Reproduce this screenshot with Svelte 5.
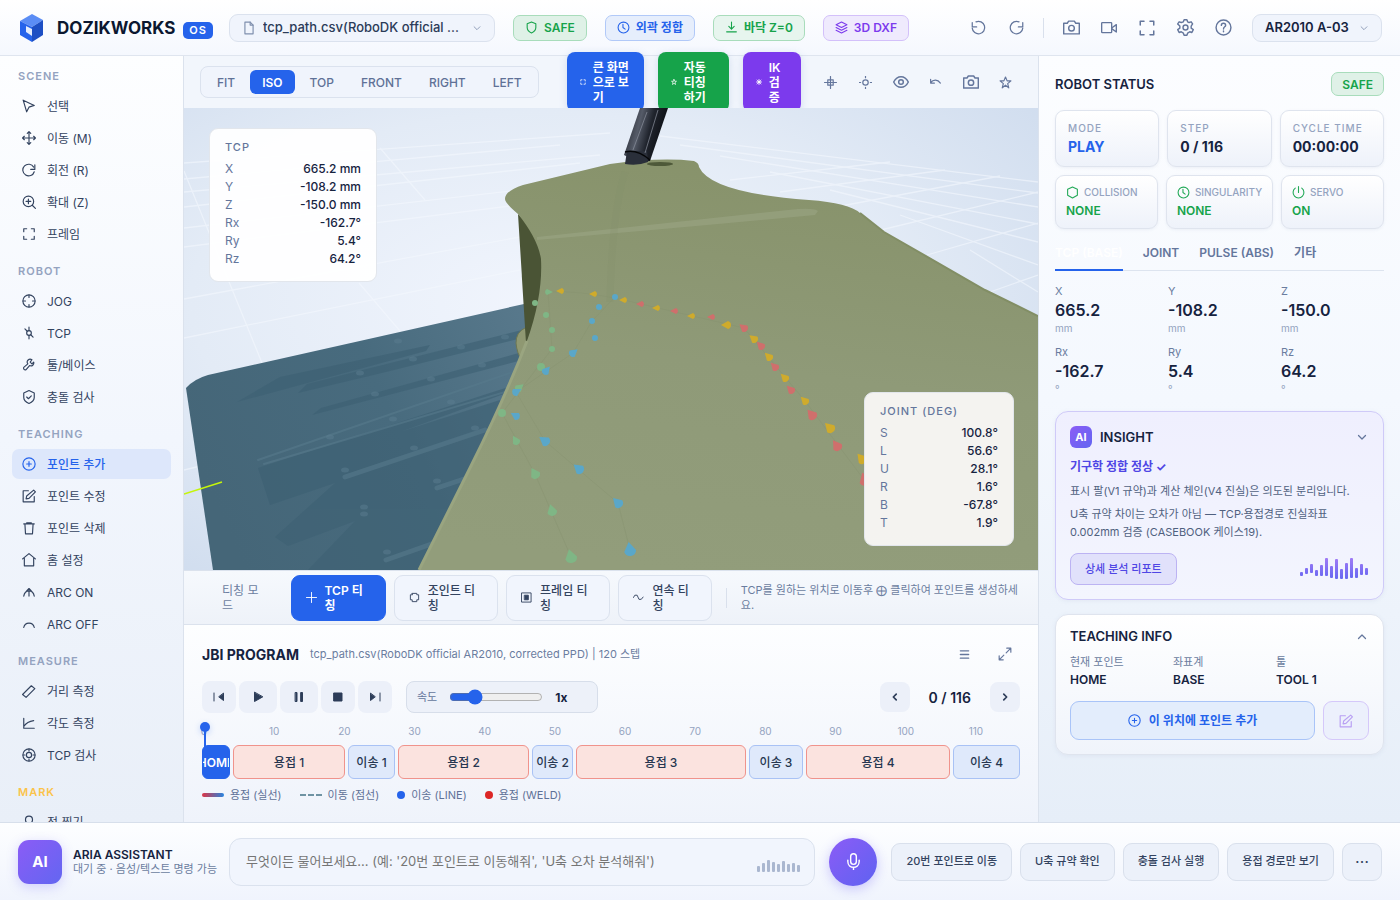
<script lang="ts">
  // Inner markup of every stroke icon, drawn on a 24 unit grid
  const icons: Record<string, string> = {
    file: '<path d="M14 2H5v20h14V7z"/><path d="M14 2v5h5"/>',
    down: '<path d="m5 9 7 7 7-7"/>',
    up: '<path d="m5 15 7-7 7 7"/>',
    left: '<path d="m15 5-7 7 7 7"/>',
    right: '<path d="m9 5 7 7-7 7"/>',
    shield: '<path d="M12 2 20 5v7c0 5-3.500 8-8 10-4.500-2-8-5-8-10V5z"/>',
    hex: '<path d="M12 2 21 6v11l-9 5-9-5V6z"/>',
    hexCheck: '<path d="M12 1 21 5v8c0 5-4 8-9 10-5-2-9-5-9-10V5z"/><path d="m8 12 3 3 5-5"/>',
    clock: '<circle cx="12" cy="12" r="10"/><path d="M11 6v6l4 3"/>',
    drop: '<path d="M12 2v13m-5-5 5 5 5-5M3 20h18"/>',
    layers: '<path d="m12 2 10 5-10 5L2 7zM2 12l10 5 10-5M2 17l10 5 10-5"/>',
    undo: '<path d="M2 4v7h7"/><path d="M2 13A10 10 0 1 0 8 3"/>',
    redo: '<path d="M22 4v7h-7"/><path d="M22 13A10 10 0 1 1 16 3"/>',
    camera: '<path d="M1 6h5l2-3h8l2 3h5v15H1z"/><circle cx="12" cy="13" r="4"/>',
    video: '<rect x="1" y="4" width="15" height="15" rx="1"/><path d="m16 12 7-5v11l-7-5"/>',
    frame: '<path d="M8 3H3v5m13-5h5v5M8 21H3v-5m13 5h5v-5"/>',
    gear: '<circle cx="12" cy="12" r="3.500"/><path d="M10 1h4l1 3 2 1 3-1 2 3-2 3v3l3 2-2 4-3-1-3 2-1 3h-4l-1-3-3-2-3 1-2-4 3-2v-3L1 7l2-3 3 1 3-1z"/>',
    help: '<circle cx="12" cy="12" r="10.500"/><path d="M9 9c0-4 6-4 6 0 0 2-3 2-3 5"/><path d="M12 17v1"/>',
    star: '<path d="m12 2 3 7h7l-6 5 2 8-6-5-6 5 2-8-6-5h7z"/>',
    burst: '<circle cx="12" cy="12" r="4"/><path d="M12 1v22M1 12h22M4 4l16 16M20 4 4 20"/>',
    target: '<rect x="7" y="7" width="10" height="10"/><path d="M12 1v22M1 12h22"/>',
    dotCross: '<circle cx="12" cy="12" r="5"/><path d="M12 0v3m0 18v3M0 12h3m18 0h3"/>',
    eye: '<path d="M1 12s4-8 11-8 11 8 11 8-4 8-11 8S1 12 1 12z"/><circle cx="12" cy="12" r="3.500"/>',
    back: '<path d="M3 6v7h7M3 12c5-6 13-6 18 1"/>',
    cursor: '<path d="m2 2 19 9-9 3-4 8z"/>',
    move: '<path d="M12 1v22M1 12h22M9 4l3-3 3 3M9 20l3 3 3-3M4 9l-3 3 3 3M20 9l3 3-3 3"/>',
    rotate: '<path d="M22 3v8h-7"/><path d="M21 15A10 10 0 1 1 20 7"/>',
    zoom: '<circle cx="11" cy="11" r="9"/><path d="m18 18 5 5M11 7v8M7 11h8"/>',
    jog: '<circle cx="12" cy="12" r="10.500"/><path d="M12 2v4m0 12v4M2 12h4m12 0h4"/>',
    tcp: '<circle cx="12" cy="12" r="4"/><path d="M12 2v6m0 8v6M5 5l4 4m6 6 4 4"/>',
    wrench: '<path d="M20 7a5 5 0 0 1-7 6l-6 7c-3 1-5-1-4-4l7-6a5 5 0 0 1 7-7l-3 4 3 3z"/>',
    add: '<circle cx="12" cy="12" r="10.500"/><path d="M12 8v8m-4-4h8"/>',
    edit: '<path d="M11 3H2v19h19v-9"/><path d="m20 2 3 3-11 11-5 1 1-5z"/>',
    trash: '<path d="M3 5h18M8 3h8M5 5l1 17h12l1-17"/>',
    home: '<path d="M1 10 12 1l11 9M4 9v13h16V9"/>',
    arcOn: '<path d="M3 19c2-12 16-12 18 0M12 19V6m-4 4 4-4 4 4"/>',
    arcOff: '<path d="M3 18c2-10 16-10 18 0"/>',
    ruler: '<path d="m1 18 15-15 6 5L7 23z"/>',
    angle: '<path d="M3 4v17h18M3 18C7 12 12 9 20 8"/>',
    ring: '<circle cx="12" cy="12" r="10.500"/><circle cx="12" cy="12" r="4.500"/><path d="M12 2v3m0 14v3M2 12h3m14 0h3"/>',
    pin: '<circle cx="12" cy="8" r="6"/><path d="M12 14v9"/>',
    power: '<path d="M12 1v11M6 4a10 10 0 1 0 12 0"/>',
    plus: '<path d="M12 1v22M1 12h22"/>',
    joint: '<path d="M7 3h10v3h4v11h-4v4H7v-4H3V6h4z"/>',
    square: '<path d="M2 2h20v20H2z"/><path fill="currentColor" d="M8 7h8v10H8z"/>',
    wave: '<path d="M1 12 4 7h5l4 9h5l4-5"/>',
    list: '<path d="M3 4h18M3 12h18M3 20h18"/>',
    expand: '<path d="M14 10 22 2m-7 0h7v7M10 14l-8 8m7 0H2v-7"/>',
    mic: '<path d="M12 1a4 4 0 0 0-4 4v7a4 4 0 0 0 8 0V5a4 4 0 0 0-4-4z"/><path d="M4 10v2c0 11 16 11 16 0v-2M12 20v4"/>',
    first: '<path d="M2 4v16"/><path fill="currentColor" d="M21 5v14l-9-7z"/>',
    play: '<path fill="currentColor" d="M5 3v18l16-9z"/>',
    pause: '<path fill="currentColor" d="M5 3h3v18H5zM16 3h3v18h-3z"/>',
    stop: '<path fill="currentColor" d="M4 4h16v16H4z"/>',
    last: '<path d="M22 4v16"/><path fill="currentColor" d="M3 5v14l9-7z"/>',
  };

  const chips = [
    { icon: "shield", text: "SAFE", tone: "green strong" },
    { icon: "clock", text: "외곽 정합", tone: "blue" },
    { icon: "drop", text: "바닥 Z=0", tone: "green" },
    { icon: "layers", text: "3D DXF", tone: "violet" },
  ];

  const groups = [
    { title: "SCENE", items: [["cursor", "선택"], ["move", "이동 (M)"], ["rotate", "회전 (R)"], ["zoom", "확대 (Z)"], ["frame", "프레임"]] },
    { title: "ROBOT", items: [["jog", "JOG"], ["tcp", "TCP"], ["wrench", "툴/베이스"], ["hexCheck", "충돌 검사"]] },
    { title: "TEACHING", items: [["add", "포인트 추가"], ["edit", "포인트 수정"], ["trash", "포인트 삭제"], ["home", "홈 설정"], ["arcOn", "ARC ON"], ["arcOff", "ARC OFF"]] },
    { title: "MEASURE", items: [["ruler", "거리 측정"], ["angle", "각도 측정"], ["ring", "TCP 검사"]] },
    { title: "MARK", items: [["pin", "점 찍기"]] },
  ];
  let activeTool = $state("포인트 추가");

  const views = ["FIT", "ISO", "TOP", "FRONT", "RIGHT", "LEFT"];
  let view = $state("ISO");

  const actions = [
    { icon: "frame", lines: ["큰 화면", "으로 보", "기"], tone: "a-blue" },
    { icon: "star", lines: ["자동", "티칭", "하기"], tone: "a-green" },
    { icon: "burst", lines: ["IK", "검", "증"], tone: "a-violet" },
  ];
  const viewTools = [["target", "중심"], ["dotCross", "원점"], ["eye", "표시"], ["back", "되돌리기"], ["camera", "캡처"], ["star", "즐겨찾기"]];

  const tcp = [["X", "665.2", "mm"], ["Y", "-108.2", "mm"], ["Z", "-150.0", "mm"], ["Rx", "-162.7", "°"], ["Ry", "5.4", "°"], ["Rz", "64.2", "°"]];
  const joints = [["S", "100.8°"], ["L", "56.6°"], ["U", "28.1°"], ["R", "1.6°"], ["B", "-67.8°"], ["T", "1.9°"]];

  const modes = [
    { icon: "plus", lines: ["TCP 티", "칭"] },
    { icon: "joint", lines: ["조인트 티", "칭"] },
    { icon: "square", lines: ["프레임 티", "칭"] },
    { icon: "wave", lines: ["연속 티", "칭"] },
  ];
  let mode = $state(0);
  let speed = $state(1);

  const transport = [["first", "처음"], ["play", "재생"], ["pause", "일시정지"], ["stop", "정지"], ["last", "마지막"]];
  const ticks = [0, 10, 20, 30, 40, 50, 60, 70, 80, 90, 100, 110];
  const segments = [
    { text: "HOME", size: 26, kind: "home" },
    { text: "용접 1", size: 110, kind: "weld" },
    { text: "이송 1", size: 45, kind: "line" },
    { text: "용접 2", size: 129, kind: "weld" },
    { text: "이송 2", size: 39, kind: "line" },
    { text: "용접 3", size: 168, kind: "weld" },
    { text: "이송 3", size: 52, kind: "line" },
    { text: "용접 4", size: 142, kind: "weld" },
    { text: "이송 4", size: 65, kind: "line" },
  ];

  const checks = [["hex", "COLLISION", "NONE"], ["clock", "SINGULARITY", "NONE"], ["power", "SERVO", "ON"]];
  const tabs = ["TCP (BASE)", "JOINT", "PULSE (ABS)", "기타"];
  let tab = $state("TCP (BASE)");

  const insightBars = [[14, 4], [10, 6], [6, 9], [12, 6], [7, 11], [0, 18], [8, 12], [1, 20], [11, 10], [5, 16], [0, 20], [10, 10], [6, 11], [10, 7]];
  const voiceBars = [6, 9, 12, 10, 8, 11, 8, 9, 7];
  const quick = ["20번 포인트로 이동", "U축 규약 확인", "충돌 검사 실행", "용접 경로만 보기"];

  // Path markers: x, y, size, heading
  const green = [[548, 292, 3, 90], [535, 303, 3, 0], [546, 315, 3, 0], [552, 330, 3, 0], [552, 349, 3, 0], [541, 367, 4, 0], [519, 388, 4, 50], [502, 413, 4, 0], [516, 441, 4, -30], [535, 474, 5, -30], [552, 511, 5, -15], [571, 557, 6, -15]];
  const blue = [[615, 297, 3, 0], [599, 307, 3, 0], [592, 321, 3, 0], [595, 338, 3, 0], [573, 353, 4, 50], [546, 371, 4, 40], [516, 392, 4, 60], [516, 416, 4, -60], [545, 441, 5, -55], [579, 469, 5, -50], [618, 503, 5, -45], [630, 550, 6, -10]];
  const yellow = [[561, 291, 3, -90], [594, 294, 3, -90], [624, 300, 3, -90], [657, 308, 3, -90], [692, 316, 3, -90], [727, 325, 4, -90], [754, 339, 4, -50], [769, 357, 4, -45], [785, 378, 4, -45], [805, 401, 4, -45], [830, 428, 5, -45], [862, 459, 5, -40]];
  const red = [[641, 304, 3, -90], [675, 311, 3, -90], [712, 317, 3, -90], [744, 328, 4, -50], [761, 346, 4, -45], [775, 367, 4, -45], [791, 390, 4, -45], [812, 415, 5, -40], [837, 446, 5, -35], [865, 480, 6, -20]];
  const trails = [
    { color: "#7fb685", points: green },
    { color: "#5aa7c9", points: blue },
    { color: "#cfab2c", points: yellow },
    { color: "#cf6f6c", points: red },
  ];
</script>

{#snippet icon(name: string, size = 14, width = 2)}
  <svg {...{ width: size, height: size }} viewBox="0 0 24 24" fill="none" stroke="currentColor" stroke-width={width} stroke-linejoin="round" stroke-linecap="round" aria-hidden="true">{@html icons[name]}</svg>
{/snippet}

<div class="app">
  <header class="topbar">
    <div class="brand">
      <svg width="27" height="28" viewBox="0 0 27 28" aria-hidden="true">
        <path d="M14 0 25 6 14 13 2 7z" fill="#5b8df5" />
        <path d="M2 7 14 13V28L2 21z" fill="#2563eb" />
        <path d="M25 6 14 13V28l11-7z" fill="#1d4fc4" />
        <path d="M8 12l6 3v7l-6-4z" fill="#e3ecfd" />
      </svg>
      <h1>DOZIKWORKS</h1>
      <span class="os">OS</span>
    </div>
    <label class="picker file">
      {@render icon("file", 14)}
      <select aria-label="파일">
        <option>tcp_path.csv(RoboDK official ...</option>
      </select>
      {@render icon("down", 10)}
    </label>
    <div class="chips">
      {#each chips as chip}
        <button class="chip {chip.tone}">{@render icon(chip.icon, 13)}{chip.text}</button>
      {/each}
    </div>
    <div class="top-tools">
      <button class="ghost" aria-label="실행 취소">{@render icon("undo", 15)}</button>
      <button class="ghost" aria-label="다시 실행">{@render icon("redo", 15)}</button>
      <i class="sep"></i>
      <button class="ghost" aria-label="캡처">{@render icon("camera", 17)}</button>
      <button class="ghost" aria-label="녹화">{@render icon("video", 16)}</button>
      <button class="ghost" aria-label="전체 화면">{@render icon("frame", 18)}</button>
      <button class="ghost" aria-label="설정">{@render icon("gear", 17)}</button>
      <button class="ghost" aria-label="도움말">{@render icon("help", 17)}</button>
    </div>
    <label class="picker robot">
      <select aria-label="로봇">
        <option>AR2010 A-03</option>
      </select>
      {@render icon("down", 10)}
    </label>
  </header>

  <nav class="sidebar">
    {#each groups as group}
      <h2 class:mark={group.title === "MARK"}>{group.title}</h2>
      {#each group.items as [name, text]}
        <button class="tool" class:active={activeTool === text} onclick={() => (activeTool = text)}>
          {@render icon(name, 14)}{text}
        </button>
      {/each}
    {/each}
  </nav>

  <main>
    <div class="toolbar">
      <div class="views">
        {#each views as v}
          <button class:active={view === v} onclick={() => (view = v)}>{v}</button>
        {/each}
      </div>
      <div class="actions">
        {#each actions as action}
          <button class={action.tone}>
            {@render icon(action.icon, 6, 3)}
            <span>{#each action.lines as line, i}{#if i}<br />{/if}{line}{/each}</span>
          </button>
        {/each}
      </div>
      <div class="view-tools">
        {#each viewTools as [name, text]}
          <button class="ghost" aria-label={text}>{@render icon(name, name === "eye" || name === "camera" ? 16 : 13, 2.2)}</button>
        {/each}
      </div>
    </div>

    <section class="viewport">
      <svg class="scene" viewBox="184 108 854 462" preserveAspectRatio="xMidYMid slice" aria-hidden="true">
        <defs>
          <radialGradient id="sky" cx="0.42" cy="0.42" r="0.75">
            <stop offset="0" stop-color="#f1f5fd" />
            <stop offset="0.55" stop-color="#e3ebf6" />
            <stop offset="1" stop-color="#cfdcee" />
          </radialGradient>
          <linearGradient id="olive" x1="0.6" y1="0" x2="0.4" y2="1">
            <stop offset="0" stop-color="#87926a" />
            <stop offset="0.5" stop-color="#8f9a78" />
            <stop offset="1" stop-color="#929d7b" />
          </linearGradient>
          <linearGradient id="teal" x1="0" y1="0.5" x2="1" y2="0.2">
            <stop offset="0" stop-color="#456678" />
            <stop offset="0.5" stop-color="#486b7e" />
            <stop offset="1" stop-color="#5b7b8e" />
          </linearGradient>
          <linearGradient id="torch" x1="0" y1="0" x2="1" y2="0.3">
            <stop offset="0" stop-color="#15181f" />
            <stop offset="0.4" stop-color="#555b68" />
            <stop offset="0.65" stop-color="#20242d" />
            <stop offset="1" stop-color="#0b0d12" />
          </linearGradient>
        </defs>
        <rect x="184" y="108" width="854" height="462" fill="url(#sky)" />
        <g stroke="#f4f8fe" stroke-width="1.300" fill="none" opacity="0.6">
          <path d="M184 163 610 133M184 179 560 145M184 192 600 155M184 207 580 163M184 228 520 190M184 247 510 206M184 299 520 237M184 338 520 270M184 470 250 454" />
          <path d="M184 171 262 363M359 283 400 331M380 148 425 200" />
          <path d="M660 136 1038 182M680 145 1038 193M720 156 1038 207M770 172 1038 224M830 190 1038 242M900 215 1038 265M970 250 1038 292" />
          <path d="M1038 192 860 235M1038 223 927 255M1038 275 990 292M1000 176 820 210M945 170 780 192M890 162 730 180" />
        </g>
        <path d="M186 388q8-9 22-13L524 304l56 50-160 216H213z" fill="url(#teal)" />
        <g fill="#3d6073" opacity="0.6">
          <path d="M237 402 280 377 430 345 426 351 300 385z" />
          <path d="M298 393 307 384 530 328v8L390 371z" />
          <path d="M312 415l9-7 209-58v8z" />
          <path d="M258 468 515 385v5L400 432 500 400v68l-62 102H308l47-49-67 25-13-9 60-54-65 22z" />
        </g>
        <g stroke="#577a8c" stroke-width="5" stroke-linecap="round" opacity="0.6">
          <path d="M345 477 485 430M437 488 470 477M386 560 440 541" />
          <path stroke-width="2" d="M258 460 510 373M264 464 515 389" />
        </g>
        <g fill="#5b7d90" opacity="0.5">
          {#each [[345, 470], [364, 507], [364, 514], [387, 552], [414, 448], [437, 481], [475, 428], [393, 419], [330, 437], [375, 394], [431, 379], [360, 373], [413, 359], [461, 347], [398, 341], [451, 402], [482, 365], [505, 337]] as [x, y]}
            <ellipse cx={x} cy={y} rx="4" ry="2.500" />
          {/each}
        </g>
        <path d="M525 328q-9 4-9 15 1 11 6 17l9-20z" fill="#8f9872" stroke="#6e7752" />
        <path d="M518 214q24 20 25 60 0 40-17 69z" fill="#4a5435" />
        <path d="M505 199q0-8 18-14L610 164q50-7 84-3 5 2 5 6 12 26 110 33 40 3 51 13L884 232 985 290l53 26V570H419L470 468q35-70 57-127 16-45 14-82-3-20-23-45Q505 203 505 199z" fill="url(#olive)" />
        <path d="M419 570 470 468q35-70 57-127" fill="none" stroke="#9aa580" stroke-width="3" />
        <path d="M860 213 884 232 985 290l53 26" fill="none" stroke="#828e65" stroke-width="2" />
        <path d="M537 237 788 210q25-3 30 1l-3 4Q680 228 537 240z" fill="#9da787" opacity="0.5" />
        <path d="M625 172q-13 40-15 130" stroke="#85906d" stroke-width="7" fill="none" opacity="0.25" />
        <g fill="none" stroke="#838f6c" opacity="0.35">
          <path d="M548 292q30-2 76 8l120 28 61 73 60 80M548 292l4 57-50 64 33 61 36 83M615 297l-23 24-19 32-57 39 29 49 73 62 12 47" />
        </g>
        <ellipse cx="660" cy="164" rx="13" ry="2" fill="#4e5939" />
        <path d="M640 108h28l-18 53q-13 2-26-6z" fill="url(#torch)" />
        <path d="M627 151h20l1 11q-10 4-23 2z" fill="#2a2f3a" />
        <path d="M625 152q12-3 25 8" fill="none" stroke="#050608" stroke-width="1.500" />
        <path d="M647 112 633 150M658 110 645 153" stroke="#8b919e" fill="none" opacity="0.7" />
        {#each trails as trail}
          {#each trail.points as [x, y, s, a]}
            <path fill={trail.color} transform="translate({x} {y}) rotate({a})" d={a ? `M0 ${-s - 2}L${s} 1Q${s - 1} ${s} 0 ${s}Q${1 - s} ${s} ${-s} 1z` : `M${-s} 0a${s} ${s} 0 1 0 ${2 * s} 0a${s} ${s} 0 1 0 ${-2 * s} 0`} />
          {/each}
        {/each}
        <path d="M184 494 222 482" stroke="#c5f50a" stroke-width="1.500" />
      </svg>
      <div class="readout tcp-card">
        <h3>TCP</h3>
        <dl>
          {#each tcp as [k, v, unit]}
            <div><dt>{k}</dt><dd>{v}{unit === "mm" ? " mm" : unit}</dd></div>
          {/each}
        </dl>
      </div>
      <div class="readout joint-card">
        <h3>JOINT (DEG)</h3>
        <dl>
          {#each joints as [k, v]}
            <div><dt>{k}</dt><dd>{v}</dd></div>
          {/each}
        </dl>
      </div>
    </section>

    <div class="teach">
      <span class="teach-label">티칭 모<br />드</span>
      {#each modes as m, n}
        <button class:active={mode === n} onclick={() => (mode = n)}>
          {@render icon(m.icon, 11)}
          <span>{m.lines[0]}<br />{m.lines[1]}</span>
        </button>
      {/each}
      <i class="sep"></i>
      <p>TCP를 원하는 위치로 이동후 ⨁ 클릭하여 포인트를 생성하세요.</p>
    </div>

    <section class="program">
      <div class="program-head">
        <h2>JBI PROGRAM</h2>
        <span>tcp_path.csv(RoboDK official AR2010, corrected PPD) | 120 스텝</span>
        <button class="ghost" aria-label="목록">{@render icon("list", 11, 3)}</button>
        <button class="ghost" aria-label="확대">{@render icon("expand", 14)}</button>
      </div>
      <div class="transport">
        <div class="keys">
          {#each transport as [name, text]}
            <button class:wide={name === "play" || name === "pause"} aria-label={text}>{@render icon(name, 12)}</button>
          {/each}
        </div>
        <label class="speed">
          <span>속도</span>
          <input type="range" min="0.1" max="4" step="0.1" bind:value={speed} />
          <b>{speed}x</b>
        </label>
        <div class="pager">
          <button aria-label="이전">{@render icon("left", 10, 4)}</button>
          <b>0 / 116</b>
          <button aria-label="다음">{@render icon("right", 10, 4)}</button>
        </div>
      </div>
      <div class="timeline">
        <div class="ruler">
          {#each ticks as t}<span>{t}</span>{/each}
        </div>
        <i class="playhead"></i>
        <div class="segments">
          {#each segments as s}
            <div class="segment {s.kind}" style="flex-grow: {s.size}"><span>{s.text}</span></div>
          {/each}
        </div>
      </div>
      <div class="legend">
        <span><i class="solid"></i>용접 (실선)</span>
        <span><i class="dashed"></i>이동 (점선)</span>
        <span><i class="dot"></i>이송 (LINE)</span>
        <span><i class="dot red"></i>용접 (WELD)</span>
      </div>
    </section>
  </main>

  <aside>
    <div class="status-head">
      <h2>ROBOT STATUS</h2>
      <span class="chip green strong">SAFE</span>
    </div>
    <div class="cards">
      <div class="card"><small>MODE</small><b class="play">PLAY</b></div>
      <div class="card"><small>STEP</small><b>0 / 116</b></div>
      <div class="card"><small>CYCLE TIME</small><b>00:00:00</b></div>
    </div>
    <div class="cards checks">
      {#each checks as [name, text, value]}
        <div class="card check">
          <span>{@render icon(name, 13)}<small>{text}</small></span>
          <b>{value}</b>
        </div>
      {/each}
    </div>
    <div class="tabs">
      {#each tabs as t}
        <button class:active={tab === t} onclick={() => (tab = t)}>{t}</button>
      {/each}
    </div>
    <div class="pose">
      {#each tcp as [k, v, unit]}
        <div><span>{k}</span><b>{v}</b><small>{unit}</small></div>
      {/each}
    </div>

    <section class="panel insight">
      <div class="panel-head">
        <span class="ai-mark">AI</span>
        <h2>INSIGHT</h2>
        <button class="ghost" aria-label="접기">{@render icon("down", 12, 2.5)}</button>
      </div>
      <h3>기구학 정합 정상 ✓</h3>
      <p>표시 팔(V1 규약)과 계산 체인(V4 진실)은 의도된 분리입니다.</p>
      <p>U축 규약 차이는 오차가 아님 — TCP·용접경로 진실좌표 0.002mm 검증 (CASEBOOK 케이스19).</p>
      <div class="insight-foot">
        <button>상세 분석 리포트</button>
        <svg width="69" height="22" viewBox="0 0 69 22" aria-hidden="true">
          <defs>
            <linearGradient id="bars" gradientUnits="userSpaceOnUse" x1="0" y1="0" x2="0" y2="22">
              <stop offset="0" stop-color="#a07bf5" />
              <stop offset="1" stop-color="#6366f1" />
            </linearGradient>
          </defs>
          {#each insightBars as [y, h], n}
            <rect x={n * 5} {y} width="3" height={h} rx="1" fill="url(#bars)" />
          {/each}
        </svg>
      </div>
    </section>

    <section class="panel teaching">
      <div class="panel-head">
        <h2>TEACHING INFO</h2>
        <button class="ghost" aria-label="접기">{@render icon("up", 12, 2.5)}</button>
      </div>
      <div class="facts">
        <div><span>현재 포인트</span><b>HOME</b></div>
        <div><span>좌표계</span><b>BASE</b></div>
        <div><span>툴</span><b>TOOL 1</b></div>
      </div>
      <div class="teaching-foot">
        <button class="add">{@render icon("add", 13)}이 위치에 포인트 추가</button>
        <button class="edit" aria-label="포인트 수정">{@render icon("edit", 14)}</button>
      </div>
    </section>
  </aside>

  <footer>
    <div class="aria">
      <span class="avatar">AI</span>
      <div>
        <h2>ARIA ASSISTANT</h2>
        <p>대기 중 · 음성/텍스트 명령 가능</p>
      </div>
    </div>
    <label class="ask">
      <input type="text" aria-label="명령" placeholder="무엇이든 물어보세요... (예: '20번 포인트로 이동해줘', 'U축 오차 분석해줘')" />
      <span class="voice">
        {#each voiceBars as h}<i style="height: {h}px"></i>{/each}
      </span>
    </label>
    <button class="mic" aria-label="음성 입력">{@render icon("mic", 17)}</button>
    <div class="quick">
      {#each quick as q}<button>{q}</button>{/each}
      <button class="more">⋯</button>
    </div>
  </footer>
</div>

<style>
  :global(body) {
    margin: 0;
    background: #eef3fb;
  }

  .app {
    display: grid;
    grid-template-columns: 184px minmax(0, 1fr) 362px;
    grid-template-rows: 56px minmax(0, 1fr) 78px;
    height: 100vh;
    overflow: hidden;
    font-family: Inter, "Noto Sans CJK KR", sans-serif;
    font-size: 12px;
    line-height: 15px;
    color: #16233f;
  }

  .app :is(h1, h2, h3, p, dl, dd) {
    margin: 0;
  }

  button,
  select,
  input {
    font: inherit;
    color: inherit;
    box-sizing: border-box;
  }

  button {
    display: flex;
    align-items: center;
    justify-content: center;
    padding: 0;
    border: 0;
    background: none;
    cursor: pointer;
    white-space: nowrap;
  }

  svg {
    flex: none;
    display: block;
  }

  .ghost {
    width: 30px;
    height: 30px;
    color: #64769c;
  }

  .sep {
    width: 1px;
    height: 20px;
    background: #d9e0ec;
  }

  .topbar {
    grid-column: 1 / -1;
    display: flex;
    align-items: center;
    padding: 0 18px;
    border-bottom: 1px solid #dfe5ef;
    background: linear-gradient(#ffffff, #f5f8fe);
  }

  .brand {
    display: flex;
    align-items: center;
    gap: 8px;
    width: 211px;
  }

  .brand h1 {
    margin-left: 4px;
    font-size: 17px;
    line-height: 22px;
    font-weight: 700;
    color: #0b1730;
  }

  .os {
    padding: 1px 6px;
    margin-top: 5px;
    border-radius: 5px;
    background: #2563eb;
    color: #fff;
    font-size: 11px;
    font-weight: 600;
    letter-spacing: 1px;
  }

  .picker {
    display: flex;
    align-items: center;
    gap: 7px;
    height: 28px;
    padding: 0 12px;
    box-sizing: border-box;
    border: 1px solid #dbe2ee;
    border-radius: 9px;
    background: #f0f4fc;
    color: #7f8fad;
  }

  .picker select {
    appearance: none;
    flex: 1;
    min-width: 0;
    padding: 0;
    border: 0;
    outline: 0;
    background: none;
    color: #2b3b58;
    font-size: 13px;
    font-weight: 500;
    text-overflow: ellipsis;
  }

  .picker.file {
    width: 266px;
  }

  .picker.robot {
    width: 130px;
    margin-left: 14px;
  }

  .robot select {
    font-weight: 600;
    color: #16233f;
  }

  .chips {
    display: flex;
    gap: 18px;
    margin-left: 18px;
  }

  .chip {
    display: flex;
    align-items: center;
    gap: 6px;
    height: 26px;
    padding: 0 11px;
    box-sizing: border-box;
    border: 1px solid;
    border-radius: 7px;
    font-weight: 600;
  }

  .green {
    color: #16a34a;
    border-color: #a8dcbb;
    background: #e7f5ee;
  }

  .green.strong {
    background: #dff1e7;
  }

  .blue {
    color: #2563eb;
    border-color: #b1c9f8;
    background: #e6eefc;
  }

  .violet {
    color: #7c3aed;
    border-color: #d3c0fa;
    background: #efeafd;
  }

  .top-tools {
    display: flex;
    align-items: center;
    gap: 8px;
    margin-left: auto;
  }

  .top-tools .sep {
    margin: 0 4px;
  }

  .sidebar {
    padding: 12px;
    border-right: 1px solid #dbe2ed;
    background: linear-gradient(#fdfeff, #f2f6fd 50%, #e9eff8);
    overflow-y: auto;
    scrollbar-width: none;
  }

  .sidebar h2 {
    margin: 14px 6px 7px;
    font-size: 11px;
    line-height: 16px;
    font-weight: 600;
    letter-spacing: 1px;
    color: #94a3c0;
  }

  .sidebar h2:first-child {
    margin-top: 0;
  }

  .sidebar h2.mark {
    color: #fbc34a;
  }

  .tool {
    justify-content: flex-start;
    gap: 11px;
    width: 100%;
    height: 30px;
    padding: 0 10px;
    border-radius: 7px;
    color: #33435f;
  }

  .tool + .tool {
    margin-top: 2px;
  }

  .tool.active {
    background: #dde7fb;
    color: #2563eb;
    font-weight: 500;
  }

  main {
    display: flex;
    flex-direction: column;
    min-width: 0;
  }

  .toolbar {
    display: flex;
    align-items: center;
    height: 52px;
    padding: 0 19px 0 16px;
    background: #f2f6fc;
  }

  .views {
    display: flex;
    gap: 3px;
    padding: 3px 4px;
    border: 1px solid #dbe2ee;
    border-radius: 8px;
    background: #f0f4fc;
  }

  .views button {
    height: 24px;
    padding: 0 12px;
    border-radius: 6px;
    color: #5f7197;
    font-weight: 500;
  }

  .views button.active {
    background: #2563eb;
    color: #fff;
    font-weight: 600;
  }

  .actions {
    display: flex;
    gap: 14px;
    margin-left: 28px;
  }

  .actions button {
    justify-content: flex-start;
    gap: 7px;
    height: 60px;
    padding: 0 15px 0 13px;
    border-radius: 8px;
    color: #fff;
    font-weight: 600;
    text-align: left;
    box-shadow: 0 2px 8px #5b7bc033;
  }

  .a-blue {
    background: #2563eb;
  }

  .a-green {
    min-width: 71px;
    background: #16a34a;
  }

  .a-violet {
    min-width: 58px;
    background: #7c3aed;
  }

  .view-tools {
    display: flex;
    gap: 8px;
    margin-left: auto;
  }

  .view-tools .ghost {
    width: 27px;
  }

  .viewport {
    position: relative;
    flex: 1;
    min-height: 0;
    overflow: hidden;
  }

  .scene {
    position: absolute;
    inset: 0;
    width: 100%;
    height: 100%;
  }

  .readout {
    position: absolute;
    box-sizing: border-box;
    padding: 10px 15px 13px;
    border: 1px solid #e2e6ec;
    border-radius: 9px;
    background: #fffffff0;
  }

  .tcp-card {
    top: 20px;
    left: 25px;
    width: 168px;
  }

  .joint-card {
    right: 24px;
    bottom: 24px;
    width: 150px;
    background: #fbfaf9ee;
  }

  .readout h3 {
    margin-bottom: 5px;
    font-size: 11px;
    line-height: 16px;
    font-weight: 500;
    letter-spacing: 1px;
    color: #64769c;
  }

  .readout dl div {
    display: flex;
    justify-content: space-between;
    line-height: 18px;
  }

  .readout dt {
    color: #64769c;
  }

  .readout dd {
    font-weight: 500;
  }

  .teach {
    display: flex;
    align-items: center;
    gap: 8px;
    height: 54px;
    padding: 0 16px;
    border-top: 1px solid #dbe2ed;
    background: linear-gradient(#f6f9fd, #eef2f9);
    box-sizing: border-box;
  }

  .teach-label {
    flex: none;
    padding: 0 24px 0 22px;
    color: #6b7d9f;
  }

  .teach button {
    gap: 8px;
    flex: none;
    height: 46px;
    padding: 0 22px 0 14px;
    border: 1px solid #dbe2ee;
    border-radius: 9px;
    background: #f1f5fd;
    color: #33435f;
    font-weight: 500;
    text-align: left;
  }

  .teach button.active {
    border-color: #2563eb;
    background: #2563eb;
    color: #fff;
    font-weight: 600;
  }

  .teach .sep {
    margin: 0 6px;
    flex: none;
  }

  .teach p {
    min-width: 0;
    font-size: 11px;
    color: #6b7d9f;
  }

  .program {
    height: 198px;
    box-sizing: border-box;
    padding: 14px 18px 0;
    border-top: 1px solid #dbe2ed;
    background: linear-gradient(#fdfeff, #eff3fb);
  }

  .program-head {
    display: flex;
    align-items: center;
    gap: 11px;
    height: 30px;
  }

  .program-head h2 {
    font-size: 14px;
    font-weight: 700;
  }

  .program-head span {
    flex: 1;
    font-size: 11px;
    color: #6b7d9f;
  }

  .transport {
    display: flex;
    align-items: center;
    gap: 14px;
    height: 32px;
    margin-top: 12px;
  }

  .keys {
    display: flex;
    gap: 3px;
  }

  .keys button,
  .pager button {
    width: 34px;
    height: 32px;
    border-radius: 8px;
    background: #ecf0f9;
    color: #2d3d59;
  }

  .keys button.wide {
    width: 38px;
  }

  .speed {
    display: flex;
    align-items: center;
    gap: 12px;
    width: 192px;
    height: 32px;
    padding: 0 10px;
    box-sizing: border-box;
    border: 1px solid #d7deea;
    border-radius: 8px;
    background: #edf1f9;
  }

  .speed span {
    color: #64769c;
    font-size: 11px;
  }

  .speed input {
    width: 94px;
    margin: 0;
    accent-color: #2563eb;
  }

  .pager {
    display: flex;
    align-items: center;
    gap: 19px;
    margin-left: auto;
  }

  .pager b {
    font-size: 14px;
    font-weight: 600;
  }

  .pager button {
    width: 30px;
    height: 30px;
  }

  .timeline {
    position: relative;
    margin-top: 10px;
  }

  .ruler {
    display: flex;
    justify-content: space-between;
    margin: 0 34px 6px -8px;
    font-size: 10px;
    line-height: 16px;
    color: #94a3c0;
  }

  .ruler span {
    width: 20px;
    text-align: center;
  }

  .playhead {
    position: absolute;
    top: 4px;
    left: 2px;
    width: 2px;
    height: 20px;
    background: #2563eb;
  }

  .playhead::before {
    content: "";
    position: absolute;
    top: -5px;
    left: -4px;
    width: 10px;
    height: 10px;
    border-radius: 50%;
    background: #2563eb;
    box-shadow: 0 2px 6px #2563eb40;
  }

  .segments {
    display: flex;
    gap: 3px;
  }

  .segment {
    display: flex;
    align-items: center;
    justify-content: center;
    flex: 1 1 0;
    min-width: 0;
    height: 34px;
    box-sizing: border-box;
    border: 1px solid;
    border-radius: 6px;
    overflow: hidden;
    font-weight: 500;
    white-space: nowrap;
    color: #263650;
  }

  .segment.home {
    border-color: #2563eb;
    background: #2563eb;
    color: #fff;
    font-weight: 600;
  }

  .weld {
    border-color: #f0938c;
    background: #fbe3df;
  }

  .line {
    border-color: #a9c2f5;
    background: #dfe9fb;
  }

  .legend {
    display: flex;
    gap: 18px;
    margin-top: 8px;
    font-size: 11px;
    line-height: 16px;
    color: #5f7197;
  }

  .legend span {
    display: flex;
    align-items: center;
    gap: 6px;
  }

  .solid {
    width: 22px;
    height: 4px;
    border-radius: 2px;
    background: linear-gradient(90deg, #dc3545, #2684e0);
  }

  .dashed {
    width: 22px;
    height: 2px;
    background: repeating-linear-gradient(90deg, #6f93a3 0 6px, transparent 6px 8px);
  }

  .dot {
    width: 8px;
    height: 8px;
    border-radius: 50%;
    background: #2563eb;
  }

  .dot.red {
    background: #dc2626;
  }

  aside {
    padding: 16px;
    border-left: 1px solid #dbe2ed;
    background: linear-gradient(#fcfdff, #f4f8fe 45%, #e6eef8);
    overflow: hidden;
  }

  .status-head {
    display: flex;
    align-items: center;
    justify-content: space-between;
  }

  aside h2 {
    font-size: 13px;
    font-weight: 600;
  }

  .status-head .chip {
    height: 24px;
    padding: 0 10px;
  }

  .cards {
    display: grid;
    grid-template-columns: repeat(3, 1fr);
    gap: 8px;
    margin-top: 14px;
  }

  .cards.checks {
    margin-top: 8px;
  }

  .card {
    display: flex;
    flex-direction: column;
    justify-content: center;
    gap: 3px;
    height: 57px;
    padding: 0 12px 2px;
    box-sizing: border-box;
    border: 1px solid #dfe4ee;
    border-radius: 9px;
    background: linear-gradient(#ffffff, #eef2fa);
    box-shadow: 0 1px 3px #8fa0c01f;
  }

  .card small {
    font-size: 10px;
    font-weight: 500;
    letter-spacing: 1px;
    color: #94a3c0;
  }

  .card b {
    font-size: 14px;
    font-weight: 700;
  }

  .card .play {
    color: #2563eb;
  }

  .card.check {
    height: 54px;
    padding: 0 10px 2px;
  }

  .check span {
    display: flex;
    align-items: center;
    gap: 5px;
    color: #22a957;
  }

  .check small {
    letter-spacing: 0;
  }

  .check b {
    font-size: 12px;
    font-weight: 600;
    color: #16a34a;
  }

  .tabs {
    display: flex;
    gap: 20px;
    margin-top: 7px;
    border-bottom: 1px solid #dde4ef;
  }

  .tabs button {
    height: 35px;
    margin-bottom: -1px;
    border-bottom: 2px solid transparent;
    color: #64769c;
    font-size: 12px;
    font-weight: 600;
  }

  .tabs button.active {
    border-color: #2563eb;
    color: #fff;
  }

  .pose {
    display: grid;
    grid-template-columns: repeat(3, 1fr);
    gap: 8px 10px;
    margin-top: 12px;
  }

  .pose div {
    display: flex;
    flex-direction: column;
  }

  .pose span {
    font-size: 11px;
    line-height: 17px;
    color: #6b7d9f;
  }

  .pose b {
    font-size: 16px;
    line-height: 21px;
    font-weight: 600;
  }

  .pose small {
    font-size: 10px;
    line-height: 15px;
    color: #94a3c0;
  }

  .panel {
    margin-top: 14px;
    padding: 14px;
    border: 1px solid #dfe4ee;
    border-radius: 13px;
    background: linear-gradient(#ffffff, #f0f4fb);
    box-shadow: 0 1px 4px #8fa0c01f;
  }

  .insight {
    border-color: #cfcaf8;
    background: linear-gradient(#efeffe, #f3f5fe);
  }

  .panel-head {
    display: flex;
    align-items: center;
    gap: 8px;
  }

  .panel-head .ghost {
    width: 14px;
    height: 14px;
    margin-left: auto;
  }

  .ai-mark,
  .avatar {
    display: flex;
    align-items: center;
    justify-content: center;
    width: 22px;
    height: 22px;
    border-radius: 6px;
    background: linear-gradient(135deg, #8b5cf6, #6366f1);
    color: #fff;
    font-size: 11px;
    font-weight: 700;
  }

  .insight h3 {
    margin: 10px 0 6px;
    font-size: 12px;
    line-height: 18px;
    font-weight: 700;
    color: #4f46e5;
  }

  .insight p {
    margin-bottom: 5px;
    font-size: 11px;
    line-height: 18px;
    color: #50617f;
  }

  .insight-foot {
    display: flex;
    align-items: center;
    justify-content: space-between;
    margin-top: 12px;
  }

  .insight-foot button {
    height: 32px;
    padding: 0 14px;
    border: 1px solid #bcb3f3;
    border-radius: 8px;
    background: #e1e1fb;
    color: #4f46e5;
    font-size: 11px;
    font-weight: 500;
  }

  .facts {
    display: grid;
    grid-template-columns: repeat(3, 1fr);
    gap: 10px;
    margin-top: 9px;
  }

  .facts div {
    display: flex;
    flex-direction: column;
  }

  .facts span {
    font-size: 11px;
    line-height: 18px;
    color: #6b7d9f;
  }

  .facts b {
    line-height: 18px;
    font-weight: 600;
  }

  .teaching-foot {
    display: flex;
    gap: 8px;
    margin-top: 12px;
  }

  .teaching-foot button {
    height: 39px;
    border: 1px solid;
    border-radius: 9px;
  }

  .teaching-foot .add {
    flex: 1;
    gap: 8px;
    border-color: #a9c4f8;
    background: #e3edfc;
    color: #2563eb;
    font-weight: 600;
  }

  .teaching-foot .edit {
    width: 46px;
    border-color: #d5c8fa;
    background: #ecf0fc;
    color: #b99ff3;
  }

  footer {
    grid-column: 1 / -1;
    display: flex;
    align-items: center;
    gap: 14px;
    padding: 0 18px;
    border-top: 1px solid #d7dfeb;
    background: linear-gradient(#fdfeff, #f0f4fd);
  }

  .aria {
    display: flex;
    align-items: center;
    gap: 11px;
    width: 197px;
  }

  .aria h2 {
    font-size: 12px;
    font-weight: 600;
    line-height: 14px;
  }

  .aria p {
    font-size: 11px;
    line-height: 14px;
    color: #6b7d9f;
    white-space: nowrap;
  }

  .avatar {
    flex: none;
    width: 44px;
    height: 44px;
    border-radius: 11px;
    font-size: 15px;
    box-shadow: 0 3px 12px #6d5cf640;
  }

  .ask {
    display: flex;
    align-items: center;
    gap: 12px;
    flex: 1;
    min-width: 0;
    height: 48px;
    padding: 0 14px 0 16px;
    box-sizing: border-box;
    border: 1px solid #dbe2ee;
    border-radius: 12px;
    background: #f1f5fd;
  }

  .ask input {
    flex: 1;
    min-width: 0;
    padding: 0;
    border: 0;
    outline: 0;
    background: none;
    font-size: 13px;
  }

  .ask input::placeholder {
    color: #757575;
  }

  .voice {
    display: flex;
    align-items: flex-end;
    gap: 2px;
    height: 12px;
    margin-top: 8px;
  }

  .voice i {
    width: 3px;
    border-radius: 1px;
    background: #aab7d0;
  }

  .mic {
    width: 48px;
    height: 48px;
    border-radius: 50%;
    background: linear-gradient(135deg, #8b5cf6, #5f62f1);
    color: #fff;
    box-shadow: 0 3px 12px #6d5cf650;
  }

  .quick {
    display: flex;
    gap: 8px;
  }

  .quick button {
    height: 38px;
    padding: 0 14px;
    border: 1px solid #d9e0ec;
    border-radius: 9px;
    background: #ecf1fa;
    color: #33435f;
    font-size: 11px;
    font-weight: 500;
  }

  .quick .more {
    width: 40px;
    padding: 0;
    font-size: 14px;
  }
</style>
